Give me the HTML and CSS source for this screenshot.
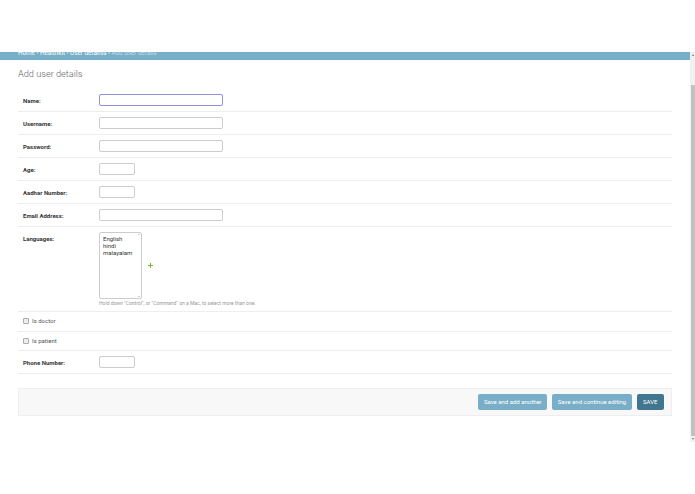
FILE: index.html
```html
<!DOCTYPE html>
<html>
<head>
<meta charset="utf-8">
<link rel="stylesheet" href="styles.css">
</head>
<body>
<div class="top-space"></div>
<div class="viewport">
  <div class="page">
    <div class="breadcrumbs"><div class="crumbs">Home › Healthkit › User detailss › <span class="current">Add user details</span></div></div>
    <div class="content">
      <h1 class="title">Add user details</h1>
      <div class="fieldset">
        <div class="row"><label class="lbl">Name:</label><div class="input wide focus"></div></div>
        <div class="row"><label class="lbl">Username:</label><div class="input wide"></div></div>
        <div class="row"><label class="lbl">Password:</label><div class="input wide"></div></div>
        <div class="row"><label class="lbl">Age:</label><div class="input short"></div></div>
        <div class="row"><label class="lbl">Aadhar Number:</label><div class="input short"></div></div>
        <div class="row"><label class="lbl">Email Address:</label><div class="input wide"></div></div>
        <div class="row tall">
          <label class="lbl">Languages:</label>
          <div class="field-col">
            <div class="select-wrap">
              <div class="multi">
                <div class="options">
                  <div class="opt">English</div>
                  <div class="opt">hindi</div>
                  <div class="opt">malayalam</div>
                </div>
                <div class="sbar"><span class="arr up"></span><span class="arr down"></span></div>
              </div>
              <svg class="add" viewBox="0 0 10 10" width="5" height="5"><path d="M4 0h2v4h4v2H6v4H4V6H0V4h4z" fill="#70bf2b"/></svg>
            </div>
            <div class="help">Hold down "Control", or "Command" on a Mac, to select more than one.</div>
          </div>
        </div>
        <div class="row check first"><span class="box"></span><span class="clabel">Is doctor</span></div>
        <div class="row check"><span class="box"></span><span class="clabel">Is patient</span></div>
        <div class="row"><label class="lbl">Phone Number:</label><div class="input short"></div></div>
      </div>
      <div class="submit-row">
        <span class="btn">Save and add another</span>
        <span class="btn">Save and continue editing</span>
        <span class="btn default">SAVE</span>
      </div>
    </div>
  </div>
  <div class="scrollbar">
    <span class="sarr sup"></span>
    <div class="thumb"></div>
    <span class="sarr sdown"></span>
  </div>
</div>
</body>
</html>
```
FILE: styles.css
```css
html, body { margin: 0; padding: 0; background: #fff; }
body { font-family: Roboto, "Liberation Sans", sans-serif; color: #333; width: 695px; height: 494px; overflow: hidden; }
.top-space { height: 52px; }
.viewport { display: flex; height: 390px; }
.page { flex: 1; overflow: hidden; }
.breadcrumbs { height: 8px; background: #79aec8; overflow: hidden; padding: 0 18px; }
.crumbs { font-size: 6.3px; line-height: 8px; margin-top: -3px; color: #fff; white-space: nowrap; }
.crumbs .current { color: #c4dce8; }
.content { padding: 8px 18px 0 18px; }
.title { margin: 0 0 9px 0; font-size: 9.2px; line-height: 12px; font-weight: 300; color: #666; }
.fieldset { display: flex; flex-direction: column; }
.row { display: flex; align-items: flex-start; padding: 5px 5px; border-bottom: 1px solid #eee; }
.lbl { flex: 0 0 76px; font-size: 6px; line-height: 8px; padding-top: 3px; font-weight: 700; color: #333; }
.input { height: 10px; border: 1px solid #ccc; border-radius: 2px; background: #fff; }
.input.wide { width: 122px; }
.input.short { width: 34px; }
.input.focus { border-color: #8f92da; }
.field-col { display: flex; flex-direction: column; }
.select-wrap { display: flex; align-items: center; gap: 6px; }
.multi { width: 41px; height: 65px; border: 1px solid #ccc; border-radius: 2px; display: flex; }
.options { flex: 1; padding: 2px 0 0 3px; }
.opt { font-size: 6px; line-height: 7px; color: #333; }
.sbar { width: 3px; margin: 1px; display: flex; flex-direction: column; justify-content: space-between; align-items: center; }
.arr { width: 0; height: 0; border-left: 1px solid transparent; border-right: 1px solid transparent; }
.arr.up { border-bottom: 1px solid #999; }
.arr.down { border-top: 1px solid #999; }
.add { display: block; }
.help { font-size: 5px; line-height: 6px; color: #999; margin-top: 1px; white-space: nowrap; }
.row.check { align-items: center; padding: 5px 5px 5px 5px; gap: 3px; }
.row.check.first { padding-bottom: 6px; }
.box { width: 4px; height: 4px; border: 1px solid #aaa; border-radius: 1px; background: #eee; }
.clabel { font-size: 6px; line-height: 8px; color: #555; }
.submit-row { margin-top: 14px; height: 26px; background: #f8f8f8; border: 1px solid #eee; display: flex; justify-content: flex-end; align-items: flex-start; gap: 4.5px; padding: 0 7px; }
.btn { margin-top: 5px; height: 16px; line-height: 16px; padding: 0 5.8px; font-size: 6px; color: #fff; background: #79aec8; border-radius: 2px; white-space: nowrap; }
.btn.default { background: #417690; padding: 0 6.5px; }
.scrollbar { width: 5px; background: #f1f1f1; display: flex; flex-direction: column; align-items: center; }
.thumb { width: 4px; background: #c1c1c1; margin-top: 27px; flex: 1; }
.sarr { width: 0; height: 0; border-left: 1.5px solid transparent; border-right: 1.5px solid transparent; margin: 2px 0; }
.sup { border-bottom: 2px solid #777; }
.sdown { border-top: 2px solid #777; }
```
